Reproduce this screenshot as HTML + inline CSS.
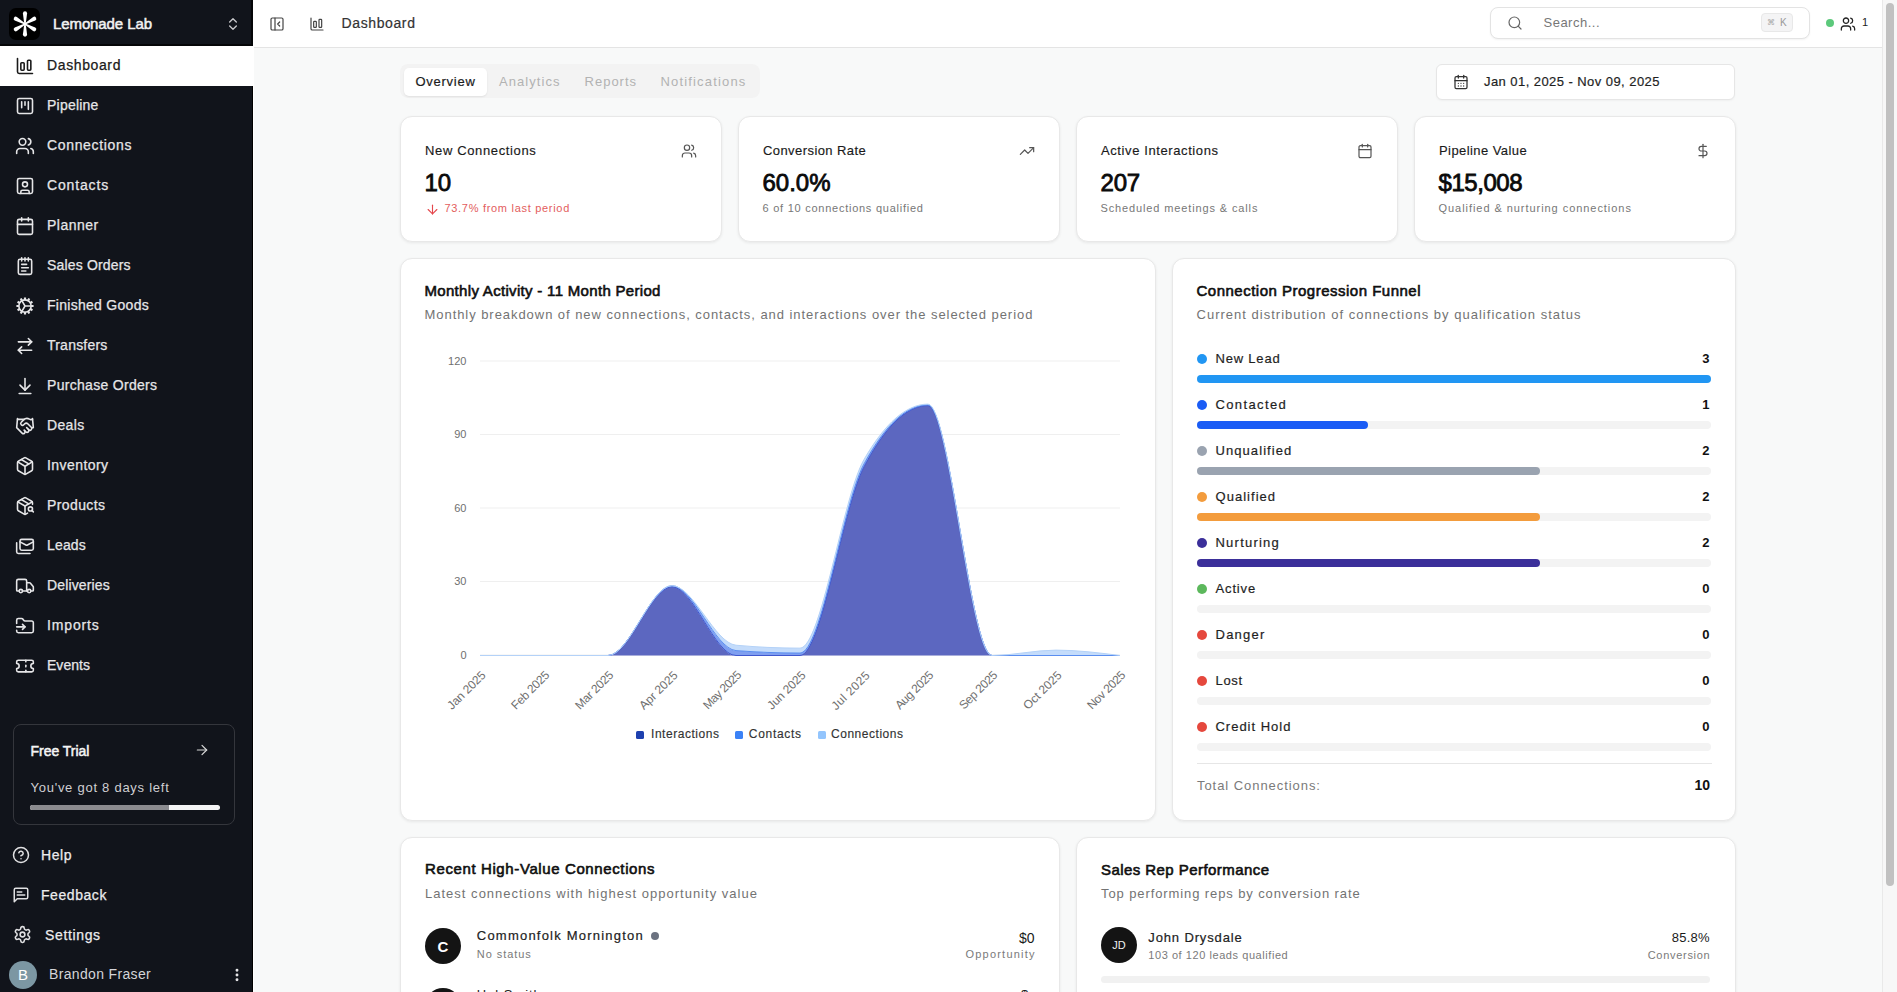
<!DOCTYPE html>
<html><head><meta charset="utf-8"><title>Dashboard</title><style>*{margin:0;padding:0;box-sizing:border-box}
html,body{width:1897px;height:992px;overflow:hidden;background:#f8f9f9;font-family:"Liberation Sans",sans-serif}
.t{position:absolute;white-space:nowrap;line-height:1}
</style></head>
<body>
<div style="position:absolute;left:400px;top:837px;width:660px;height:200px;background:#fff;border:1px solid #e8e8e8;border-radius:12px;box-shadow:0 1px 3px rgba(0,0,0,.07);box-sizing:border-box;"></div><div class="t" style="left:425.00px;top:861.10px;font-size:15px;color:#0f0f0f;font-weight:400;letter-spacing:0.612px;-webkit-text-stroke:0.6px #0f0f0f;">Recent High-Value Connections</div><div class="t" style="left:425.00px;top:886.80px;font-size:13px;color:#737373;font-weight:400;letter-spacing:1.013px;">Latest connections with highest opportunity value</div><div style="position:absolute;left:425px;top:928px;width:36px;height:36px;background:#141414;border-radius:50%;"></div><div class="t" style="left:437.59px;top:938.80px;font-size:15px;color:#fff;font-weight:700;">C</div><div class="t" style="left:476.80px;top:929.20px;font-size:13px;color:#222222;font-weight:400;letter-spacing:1.217px;-webkit-text-stroke:0.2px #222222;">Commonfolk Mornington</div><div style="position:absolute;left:651px;top:932px;width:8px;height:8px;background:#6b7280;border-radius:50%;"></div><div class="t" style="left:476.80px;top:948.89px;font-size:11px;color:#7a7a7a;font-weight:400;letter-spacing:0.938px;">No status</div><div class="t" style="left:1018.94px;top:930.65px;font-size:14px;color:#1a1a1a;font-weight:400;">$0</div><div class="t" style="left:965.50px;top:949.19px;font-size:11px;color:#7a7a7a;font-weight:400;letter-spacing:1.209px;">Opportunity</div><div style="position:absolute;left:425px;top:988px;width:36px;height:36px;background:#141414;border-radius:50%;"></div><div class="t" style="left:476.80px;top:987.50px;font-size:13px;color:#222222;font-weight:400;letter-spacing:0.955px;">Hal Smith</div><div class="t" style="left:1021.00px;top:987.50px;font-size:13px;color:#1a1a1a;font-weight:400;">$</div><div style="position:absolute;left:1076px;top:837px;width:660px;height:200px;background:#fff;border:1px solid #e8e8e8;border-radius:12px;box-shadow:0 1px 3px rgba(0,0,0,.07);box-sizing:border-box;"></div><div class="t" style="left:1101.00px;top:861.70px;font-size:15px;color:#0f0f0f;font-weight:400;letter-spacing:0.437px;-webkit-text-stroke:0.6px #0f0f0f;">Sales Rep Performance</div><div class="t" style="left:1101.00px;top:887.30px;font-size:13px;color:#737373;font-weight:400;letter-spacing:0.897px;">Top performing reps by conversion rate</div><div style="position:absolute;left:1101px;top:927px;width:36px;height:36px;background:#141414;border-radius:50%;"></div><div class="t" style="left:1112.28px;top:939.69px;font-size:11px;color:#f0f0f0;font-weight:400;">JD</div><div class="t" style="left:1148.30px;top:931.30px;font-size:13px;color:#222222;font-weight:400;letter-spacing:0.865px;-webkit-text-stroke:0.2px #222222;">John Drysdale</div><div class="t" style="left:1148.30px;top:950.09px;font-size:11px;color:#7a7a7a;font-weight:400;letter-spacing:0.560px;">103 of 120 leads qualified</div><div class="t" style="left:1671.70px;top:931.30px;font-size:13px;color:#1a1a1a;font-weight:400;letter-spacing:0.281px;">85.8%</div><div class="t" style="left:1647.70px;top:950.09px;font-size:11px;color:#7a7a7a;font-weight:400;letter-spacing:0.705px;">Conversion</div><div style="position:absolute;left:1101px;top:976px;width:609px;height:7px;background:#f1f1f1;border-radius:4px;"></div><div style="position:absolute;left:400px;top:258px;width:756px;height:563px;background:#fff;border:1px solid #e8e8e8;border-radius:12px;box-shadow:0 1px 3px rgba(0,0,0,.07);box-sizing:border-box;"></div><div class="t" style="left:424.50px;top:282.50px;font-size:15px;color:#0f0f0f;font-weight:400;letter-spacing:0.312px;-webkit-text-stroke:0.6px #0f0f0f;">Monthly Activity - 11 Month Period</div><div class="t" style="left:424.50px;top:308.10px;font-size:13px;color:#737373;font-weight:400;letter-spacing:0.946px;">Monthly breakdown of new connections, contacts, and interactions over the selected period</div><svg style="position:absolute;left:0;top:0" width="1897" height="992"><line x1="480" x2="1120" y1="655.0" y2="655.0" stroke="#efefef" stroke-width="1"/><line x1="480" x2="1120" y1="581.5" y2="581.5" stroke="#efefef" stroke-width="1"/><line x1="480" x2="1120" y1="508.0" y2="508.0" stroke="#efefef" stroke-width="1"/><line x1="480" x2="1120" y1="434.5" y2="434.5" stroke="#efefef" stroke-width="1"/><line x1="480" x2="1120" y1="361.0" y2="361.0" stroke="#efefef" stroke-width="1"/><path d="M480.00,655.50C501.33,655.50 522.67,655.50 544.00,655.50C565.33,655.50 586.67,655.50 608.00,655.50C629.33,655.50 650.67,586.90 672.00,586.90C693.33,586.90 714.67,655.50 736.00,655.50C757.33,655.50 778.67,655.50 800.00,655.50C821.33,655.50 842.67,507.68 864.00,466.85C885.33,426.02 906.67,405.60 928.00,405.60C949.33,405.60 970.67,655.50 992.00,655.50C1013.33,655.50 1034.67,655.50 1056.00,655.50C1077.33,655.50 1098.67,655.50 1120.00,655.50L1120.00,655.50C1098.67,655.50 1077.33,655.50 1056.00,655.50C1034.67,655.50 1013.33,655.50 992.00,655.50C970.67,655.50 949.33,655.50 928.00,655.50C906.67,655.50 885.33,655.50 864.00,655.50C842.67,655.50 821.33,655.50 800.00,655.50C778.67,655.50 757.33,655.50 736.00,655.50C714.67,655.50 693.33,655.50 672.00,655.50C650.67,655.50 629.33,655.50 608.00,655.50C586.67,655.50 565.33,655.50 544.00,655.50C522.67,655.50 501.33,655.50 480.00,655.50Z" fill="#5c67c0" fill-opacity="1" stroke="none"/><path d="M480.00,655.50C501.33,655.50 522.67,655.50 544.00,655.50C565.33,655.50 586.67,655.50 608.00,655.50C629.33,655.50 650.67,585.67 672.00,585.67C693.33,585.67 714.67,648.97 736.00,650.60C757.33,652.23 778.67,653.05 800.00,653.05C821.33,653.05 842.67,503.27 864.00,463.91C885.33,424.55 906.67,404.87 928.00,404.87C949.33,404.87 970.67,655.50 992.00,655.50C1013.33,655.50 1034.67,655.50 1056.00,655.50C1077.33,655.50 1098.67,655.50 1120.00,655.50L1120.00,655.50C1098.67,655.50 1077.33,655.50 1056.00,655.50C1034.67,655.50 1013.33,655.50 992.00,655.50C970.67,655.50 949.33,405.60 928.00,405.60C906.67,405.60 885.33,426.02 864.00,466.85C842.67,507.68 821.33,655.50 800.00,655.50C778.67,655.50 757.33,655.50 736.00,655.50C714.67,655.50 693.33,586.90 672.00,586.90C650.67,586.90 629.33,655.50 608.00,655.50C586.67,655.50 565.33,655.50 544.00,655.50C522.67,655.50 501.33,655.50 480.00,655.50Z" fill="#7f9ff0" fill-opacity="1" stroke="none"/><path d="M480.00,655.50C501.33,655.50 522.67,655.50 544.00,655.50C565.33,655.50 586.67,655.50 608.00,655.50C629.33,655.50 650.67,585.67 672.00,585.67C693.33,585.67 714.67,643.25 736.00,645.21C757.33,647.17 778.67,648.15 800.00,648.15C821.33,648.15 842.67,496.41 864.00,459.50C885.33,422.59 906.67,404.13 928.00,404.13C949.33,404.13 970.67,655.50 992.00,655.50C1013.33,655.50 1034.67,650.11 1056.00,650.11C1077.33,650.11 1098.67,652.81 1120.00,655.50L1120.00,655.50C1098.67,655.50 1077.33,655.50 1056.00,655.50C1034.67,655.50 1013.33,655.50 992.00,655.50C970.67,655.50 949.33,404.87 928.00,404.87C906.67,404.87 885.33,424.55 864.00,463.91C842.67,503.27 821.33,653.05 800.00,653.05C778.67,653.05 757.33,652.23 736.00,650.60C714.67,648.97 693.33,585.67 672.00,585.67C650.67,585.67 629.33,655.50 608.00,655.50C586.67,655.50 565.33,655.50 544.00,655.50C522.67,655.50 501.33,655.50 480.00,655.50Z" fill="#c4dcfb" fill-opacity="1" stroke="none"/><path d="M480.00,655.50C501.33,655.50 522.67,655.50 544.00,655.50C565.33,655.50 586.67,655.50 608.00,655.50C629.33,655.50 650.67,586.90 672.00,586.90C693.33,586.90 714.67,655.50 736.00,655.50C757.33,655.50 778.67,655.50 800.00,655.50C821.33,655.50 842.67,507.68 864.00,466.85C885.33,426.02 906.67,405.60 928.00,405.60C949.33,405.60 970.67,655.50 992.00,655.50C1013.33,655.50 1034.67,655.50 1056.00,655.50C1077.33,655.50 1098.67,655.50 1120.00,655.50" fill="none" stroke="#4058cf" stroke-width="1"/><path d="M480.00,655.50C501.33,655.50 522.67,655.50 544.00,655.50C565.33,655.50 586.67,655.50 608.00,655.50C629.33,655.50 650.67,585.67 672.00,585.67C693.33,585.67 714.67,648.97 736.00,650.60C757.33,652.23 778.67,653.05 800.00,653.05C821.33,653.05 842.67,503.27 864.00,463.91C885.33,424.55 906.67,404.87 928.00,404.87C949.33,404.87 970.67,655.50 992.00,655.50C1013.33,655.50 1034.67,655.50 1056.00,655.50C1077.33,655.50 1098.67,655.50 1120.00,655.50" fill="none" stroke="#5a8ef0" stroke-width="1"/><path d="M480.00,655.50C501.33,655.50 522.67,655.50 544.00,655.50C565.33,655.50 586.67,655.50 608.00,655.50C629.33,655.50 650.67,585.67 672.00,585.67C693.33,585.67 714.67,643.25 736.00,645.21C757.33,647.17 778.67,648.15 800.00,648.15C821.33,648.15 842.67,496.41 864.00,459.50C885.33,422.59 906.67,404.13 928.00,404.13C949.33,404.13 970.67,655.50 992.00,655.50C1013.33,655.50 1034.67,650.11 1056.00,650.11C1077.33,650.11 1098.67,652.81 1120.00,655.50" fill="none" stroke="#b4d2f8" stroke-width="1"/></svg><div class="t" style="left:460.38px;top:649.69px;font-size:11px;color:#6f6f6f;font-weight:400;">0</div><div class="t" style="left:454.25px;top:576.19px;font-size:11px;color:#6f6f6f;font-weight:400;">30</div><div class="t" style="left:454.25px;top:502.69px;font-size:11px;color:#6f6f6f;font-weight:400;">60</div><div class="t" style="left:454.25px;top:429.19px;font-size:11px;color:#6f6f6f;font-weight:400;">90</div><div class="t" style="left:448.12px;top:355.69px;font-size:11px;color:#6f6f6f;font-weight:400;">120</div><div class="t" style="left:437.50px;top:665.84px;font-size:12px;color:#6f6f6f;letter-spacing:-0.123px;transform-origin:100% 84.65%;transform:rotate(-45deg);">Jan 2025</div><div class="t" style="left:501.50px;top:665.84px;font-size:12px;color:#6f6f6f;letter-spacing:-0.312px;transform-origin:100% 84.65%;transform:rotate(-45deg);">Feb 2025</div><div class="t" style="left:565.50px;top:665.84px;font-size:12px;color:#6f6f6f;letter-spacing:-0.312px;transform-origin:100% 84.65%;transform:rotate(-45deg);">Mar 2025</div><div class="t" style="left:629.50px;top:665.84px;font-size:12px;color:#6f6f6f;letter-spacing:-0.027px;transform-origin:100% 84.65%;transform:rotate(-45deg);">Apr 2025</div><div class="t" style="left:693.50px;top:665.84px;font-size:12px;color:#6f6f6f;letter-spacing:-0.598px;transform-origin:100% 84.65%;transform:rotate(-45deg);">May 2025</div><div class="t" style="left:757.50px;top:665.84px;font-size:12px;color:#6f6f6f;letter-spacing:-0.123px;transform-origin:100% 84.65%;transform:rotate(-45deg);">Jun 2025</div><div class="t" style="left:821.50px;top:665.84px;font-size:12px;color:#6f6f6f;letter-spacing:0.449px;transform-origin:100% 84.65%;transform:rotate(-45deg);">Jul 2025</div><div class="t" style="left:885.50px;top:665.84px;font-size:12px;color:#6f6f6f;letter-spacing:-0.408px;transform-origin:100% 84.65%;transform:rotate(-45deg);">Aug 2025</div><div class="t" style="left:949.50px;top:665.84px;font-size:12px;color:#6f6f6f;letter-spacing:-0.408px;transform-origin:100% 84.65%;transform:rotate(-45deg);">Sep 2025</div><div class="t" style="left:1013.50px;top:665.84px;font-size:12px;color:#6f6f6f;letter-spacing:-0.025px;transform-origin:100% 84.65%;transform:rotate(-45deg);">Oct 2025</div><div class="t" style="left:1077.50px;top:665.84px;font-size:12px;color:#6f6f6f;letter-spacing:-0.408px;transform-origin:100% 84.65%;transform:rotate(-45deg);">Nov 2025</div><div style="position:absolute;left:636px;top:731px;width:8px;height:8px;background:#1e40af;border-radius:1.5px;"></div><div class="t" style="left:651.00px;top:728.34px;font-size:12px;color:#333333;font-weight:400;letter-spacing:0.544px;-webkit-text-stroke:0.15px #333333;">Interactions</div><div style="position:absolute;left:734.5px;top:731px;width:8px;height:8px;background:#3b82f6;border-radius:1.5px;"></div><div class="t" style="left:748.80px;top:728.34px;font-size:12px;color:#333333;font-weight:400;letter-spacing:0.694px;-webkit-text-stroke:0.15px #333333;">Contacts</div><div style="position:absolute;left:817.5px;top:731px;width:8px;height:8px;background:#93c5fd;border-radius:1.5px;"></div><div class="t" style="left:831.00px;top:728.34px;font-size:12px;color:#333333;font-weight:400;letter-spacing:0.530px;-webkit-text-stroke:0.15px #333333;">Connections</div><div style="position:absolute;left:1172px;top:258px;width:564px;height:563px;background:#fff;border:1px solid #e8e8e8;border-radius:12px;box-shadow:0 1px 3px rgba(0,0,0,.07);box-sizing:border-box;"></div><div class="t" style="left:1196.50px;top:282.70px;font-size:15px;color:#0f0f0f;font-weight:400;letter-spacing:0.495px;-webkit-text-stroke:0.6px #0f0f0f;">Connection Progression Funnel</div><div class="t" style="left:1196.50px;top:308.10px;font-size:13px;color:#737373;font-weight:400;letter-spacing:1.013px;">Current distribution of connections by qualification status</div><div style="position:absolute;left:1197px;top:354px;width:10px;height:10px;background:#2196f3;border-radius:50%;"></div><div class="t" style="left:1215.50px;top:352.20px;font-size:13px;color:#1f1f1f;font-weight:400;letter-spacing:0.805px;-webkit-text-stroke:0.2px #1f1f1f;">New Lead</div><div class="t" style="left:1702.27px;top:352.20px;font-size:13px;color:#111;font-weight:700;">3</div><div style="position:absolute;left:1197px;top:375px;width:514px;height:8px;background:#f3f3f3;border-radius:4px;"></div><div style="position:absolute;left:1197px;top:375px;width:514px;height:8px;background:#2196f3;border-radius:4px;"></div><div style="position:absolute;left:1197px;top:400px;width:10px;height:10px;background:#1a5cf5;border-radius:50%;"></div><div class="t" style="left:1215.50px;top:398.20px;font-size:13px;color:#1f1f1f;font-weight:400;letter-spacing:1.377px;-webkit-text-stroke:0.2px #1f1f1f;">Contacted</div><div class="t" style="left:1702.27px;top:398.20px;font-size:13px;color:#111;font-weight:700;">1</div><div style="position:absolute;left:1197px;top:421px;width:514px;height:8px;background:#f3f3f3;border-radius:4px;"></div><div style="position:absolute;left:1197px;top:421px;width:171px;height:8px;background:#1a5cf5;border-radius:4px;"></div><div style="position:absolute;left:1197px;top:446px;width:10px;height:10px;background:#9aa3b0;border-radius:50%;"></div><div class="t" style="left:1215.50px;top:444.20px;font-size:13px;color:#1f1f1f;font-weight:400;letter-spacing:1.072px;-webkit-text-stroke:0.2px #1f1f1f;">Unqualified</div><div class="t" style="left:1702.27px;top:444.20px;font-size:13px;color:#111;font-weight:700;">2</div><div style="position:absolute;left:1197px;top:467px;width:514px;height:8px;background:#f3f3f3;border-radius:4px;"></div><div style="position:absolute;left:1197px;top:467px;width:343px;height:8px;background:#9aa3b0;border-radius:4px;"></div><div style="position:absolute;left:1197px;top:492px;width:10px;height:10px;background:#f39c3d;border-radius:50%;"></div><div class="t" style="left:1215.50px;top:490.20px;font-size:13px;color:#1f1f1f;font-weight:400;letter-spacing:1.034px;-webkit-text-stroke:0.2px #1f1f1f;">Qualified</div><div class="t" style="left:1702.27px;top:490.20px;font-size:13px;color:#111;font-weight:700;">2</div><div style="position:absolute;left:1197px;top:513px;width:514px;height:8px;background:#f3f3f3;border-radius:4px;"></div><div style="position:absolute;left:1197px;top:513px;width:343px;height:8px;background:#f39c3d;border-radius:4px;"></div><div style="position:absolute;left:1197px;top:538px;width:10px;height:10px;background:#3b2f9a;border-radius:50%;"></div><div class="t" style="left:1215.50px;top:536.20px;font-size:13px;color:#1f1f1f;font-weight:400;letter-spacing:1.227px;-webkit-text-stroke:0.2px #1f1f1f;">Nurturing</div><div class="t" style="left:1702.27px;top:536.20px;font-size:13px;color:#111;font-weight:700;">2</div><div style="position:absolute;left:1197px;top:559px;width:514px;height:8px;background:#f3f3f3;border-radius:4px;"></div><div style="position:absolute;left:1197px;top:559px;width:343px;height:8px;background:#3b2f9a;border-radius:4px;"></div><div style="position:absolute;left:1197px;top:584px;width:10px;height:10px;background:#5cb85c;border-radius:50%;"></div><div class="t" style="left:1215.50px;top:582.20px;font-size:13px;color:#1f1f1f;font-weight:400;letter-spacing:0.859px;-webkit-text-stroke:0.2px #1f1f1f;">Active</div><div class="t" style="left:1702.27px;top:582.20px;font-size:13px;color:#111;font-weight:700;">0</div><div style="position:absolute;left:1197px;top:605px;width:514px;height:8px;background:#f3f3f3;border-radius:4px;"></div><div style="position:absolute;left:1197px;top:630px;width:10px;height:10px;background:#e5483d;border-radius:50%;"></div><div class="t" style="left:1215.50px;top:628.20px;font-size:13px;color:#1f1f1f;font-weight:400;letter-spacing:1.249px;-webkit-text-stroke:0.2px #1f1f1f;">Danger</div><div class="t" style="left:1702.27px;top:628.20px;font-size:13px;color:#111;font-weight:700;">0</div><div style="position:absolute;left:1197px;top:651px;width:514px;height:8px;background:#f3f3f3;border-radius:4px;"></div><div style="position:absolute;left:1197px;top:676px;width:10px;height:10px;background:#e5483d;border-radius:50%;"></div><div class="t" style="left:1215.50px;top:674.20px;font-size:13px;color:#1f1f1f;font-weight:400;letter-spacing:0.674px;-webkit-text-stroke:0.2px #1f1f1f;">Lost</div><div class="t" style="left:1702.27px;top:674.20px;font-size:13px;color:#111;font-weight:700;">0</div><div style="position:absolute;left:1197px;top:697px;width:514px;height:8px;background:#f3f3f3;border-radius:4px;"></div><div style="position:absolute;left:1197px;top:722px;width:10px;height:10px;background:#e5483d;border-radius:50%;"></div><div class="t" style="left:1215.50px;top:720.20px;font-size:13px;color:#1f1f1f;font-weight:400;letter-spacing:0.985px;-webkit-text-stroke:0.2px #1f1f1f;">Credit Hold</div><div class="t" style="left:1702.27px;top:720.20px;font-size:13px;color:#111;font-weight:700;">0</div><div style="position:absolute;left:1197px;top:743px;width:514px;height:8px;background:#f3f3f3;border-radius:4px;"></div><div style="position:absolute;left:1197px;top:763px;width:515px;height:1px;background:#e6e6e6;"></div><div class="t" style="left:1197.00px;top:779.00px;font-size:13px;color:#7a7a7a;font-weight:400;letter-spacing:0.942px;">Total Connections:</div><div class="t" style="left:1694.44px;top:778.15px;font-size:14px;color:#111;font-weight:700;">10</div><div style="position:absolute;left:400px;top:116px;width:322px;height:126px;background:#fff;border:1px solid #e8e8e8;border-radius:12px;box-shadow:0 1px 3px rgba(0,0,0,.07);box-sizing:border-box;"></div><div class="t" style="left:425.00px;top:144.20px;font-size:13px;color:#1a1a1a;font-weight:400;letter-spacing:0.634px;-webkit-text-stroke:0.15px #1a1a1a;">New Connections</div><div class="t" style="left:424.50px;top:171.28px;font-size:24px;color:#0a0a0a;font-weight:400;-webkit-text-stroke:0.8px #0a0a0a;">10</div><svg style="position:absolute;left:424.5px;top:202px" width="15" height="15" viewBox="0 0 24 24" fill="none" stroke="#e5484d" stroke-width="1.8" stroke-linecap="round" stroke-linejoin="round"><path d="M12 5v14"/><path d="m19 12-7 7-7-7"/></svg><div class="t" style="left:444.40px;top:202.59px;font-size:11px;color:#e35d5d;font-weight:400;letter-spacing:0.708px;">73.7% from last period</div><svg style="position:absolute;left:681px;top:143px" width="16" height="16" viewBox="0 0 24 24" fill="none" stroke="#555" stroke-width="1.8" stroke-linecap="round" stroke-linejoin="round"><path d="M16 21v-2a4 4 0 0 0-4-4H6a4 4 0 0 0-4 4v2"/><circle cx="9" cy="7" r="4"/><path d="M22 21v-2a4 4 0 0 0-3-3.87"/><path d="M16 3.13a4 4 0 0 1 0 7.75"/></svg><div style="position:absolute;left:738px;top:116px;width:322px;height:126px;background:#fff;border:1px solid #e8e8e8;border-radius:12px;box-shadow:0 1px 3px rgba(0,0,0,.07);box-sizing:border-box;"></div><div class="t" style="left:763.00px;top:144.20px;font-size:13px;color:#1a1a1a;font-weight:400;letter-spacing:0.424px;-webkit-text-stroke:0.15px #1a1a1a;">Conversion Rate</div><div class="t" style="left:762.50px;top:171.28px;font-size:24px;color:#0a0a0a;font-weight:400;letter-spacing:-0.012px;-webkit-text-stroke:0.8px #0a0a0a;">60.0%</div><div class="t" style="left:762.50px;top:202.59px;font-size:11px;color:#777777;font-weight:400;letter-spacing:0.748px;">6 of 10 connections qualified</div><svg style="position:absolute;left:1019px;top:143px" width="16" height="16" viewBox="0 0 24 24" fill="none" stroke="#555" stroke-width="1.8" stroke-linecap="round" stroke-linejoin="round"><polyline points="22 7 13.5 15.5 8.5 10.5 2 17"/><polyline points="16 7 22 7 22 13"/></svg><div style="position:absolute;left:1076px;top:116px;width:322px;height:126px;background:#fff;border:1px solid #e8e8e8;border-radius:12px;box-shadow:0 1px 3px rgba(0,0,0,.07);box-sizing:border-box;"></div><div class="t" style="left:1101.00px;top:144.20px;font-size:13px;color:#1a1a1a;font-weight:400;letter-spacing:0.598px;-webkit-text-stroke:0.15px #1a1a1a;">Active Interactions</div><div class="t" style="left:1100.50px;top:171.28px;font-size:24px;color:#0a0a0a;font-weight:400;letter-spacing:-0.166px;-webkit-text-stroke:0.8px #0a0a0a;">207</div><div class="t" style="left:1100.50px;top:202.59px;font-size:11px;color:#777777;font-weight:400;letter-spacing:0.871px;">Scheduled meetings &amp; calls</div><svg style="position:absolute;left:1357px;top:143px" width="16" height="16" viewBox="0 0 24 24" fill="none" stroke="#555" stroke-width="1.8" stroke-linecap="round" stroke-linejoin="round"><path d="M8 2v4"/><path d="M16 2v4"/><rect width="18" height="18" x="3" y="4" rx="2"/><path d="M3 10h18"/></svg><div style="position:absolute;left:1414px;top:116px;width:322px;height:126px;background:#fff;border:1px solid #e8e8e8;border-radius:12px;box-shadow:0 1px 3px rgba(0,0,0,.07);box-sizing:border-box;"></div><div class="t" style="left:1439.00px;top:144.20px;font-size:13px;color:#1a1a1a;font-weight:400;letter-spacing:0.424px;-webkit-text-stroke:0.15px #1a1a1a;">Pipeline Value</div><div class="t" style="left:1438.50px;top:171.28px;font-size:24px;color:#0a0a0a;font-weight:400;letter-spacing:-0.456px;-webkit-text-stroke:0.8px #0a0a0a;">$15,008</div><div class="t" style="left:1438.50px;top:202.59px;font-size:11px;color:#777777;font-weight:400;letter-spacing:0.948px;">Qualified &amp; nurturing connections</div><svg style="position:absolute;left:1695px;top:143px" width="16" height="16" viewBox="0 0 24 24" fill="none" stroke="#555" stroke-width="1.8" stroke-linecap="round" stroke-linejoin="round"><line x1="12" x2="12" y1="2" y2="22"/><path d="M17 5H9.5a3.5 3.5 0 0 0 0 7h5a3.5 3.5 0 0 1 0 7H6"/></svg><div style="position:absolute;left:400px;top:64px;width:360px;height:34px;background:#f3f3f3;border-radius:8px;"></div><div style="position:absolute;left:403.5px;top:67.5px;width:83.5px;height:28.5px;background:#fff;border-radius:5px;box-shadow:0 1px 2px rgba(0,0,0,.08);"></div><div class="t" style="left:415.50px;top:74.80px;font-size:13px;color:#1c1c1c;font-weight:400;letter-spacing:0.730px;-webkit-text-stroke:0.2px #1c1c1c;">Overview</div><div class="t" style="left:499.00px;top:74.80px;font-size:13px;color:#b2b2b2;font-weight:400;letter-spacing:1.071px;">Analytics</div><div class="t" style="left:584.50px;top:74.80px;font-size:13px;color:#b2b2b2;font-weight:400;letter-spacing:1.011px;">Reports</div><div class="t" style="left:660.50px;top:74.80px;font-size:13px;color:#b2b2b2;font-weight:400;letter-spacing:1.164px;">Notifications</div><div style="position:absolute;left:1436px;top:64px;width:299px;height:36px;background:#fff;border:1px solid #e6e6e6;border-radius:6px;box-shadow:0 1px 2px rgba(0,0,0,.04);"></div><svg style="position:absolute;left:1452.5px;top:74.3px" width="16" height="16" viewBox="0 0 24 24" fill="none" stroke="#333" stroke-width="1.9" stroke-linecap="round" stroke-linejoin="round"><path d="M8 2v4"/><path d="M16 2v4"/><rect width="18" height="18" x="3" y="4" rx="2"/><path d="M3 10h18"/><path d="M8 14h.01"/><path d="M12 14h.01"/><path d="M16 14h.01"/><path d="M8 18h.01"/><path d="M12 18h.01"/><path d="M16 18h.01"/></svg><div class="t" style="left:1484.00px;top:74.90px;font-size:13px;color:#1f1f1f;font-weight:400;letter-spacing:0.438px;-webkit-text-stroke:0.2px #1f1f1f;">Jan 01, 2025 - Nov 09, 2025</div><div style="position:absolute;left:253px;top:0px;width:1629px;height:48px;background:#fff;border-bottom:1px solid #e4e4e4;"></div><svg style="position:absolute;left:269px;top:16px" width="16" height="16" viewBox="0 0 24 24" fill="none" stroke="#444" stroke-width="1.8" stroke-linecap="round" stroke-linejoin="round"><rect width="18" height="18" x="3" y="3" rx="2"/><path d="M9 3v18"/><path d="m16 15-3-3 3-3"/></svg><svg style="position:absolute;left:309px;top:16px" width="16" height="16" viewBox="0 0 24 24" fill="none" stroke="#444" stroke-width="1.8" stroke-linecap="round" stroke-linejoin="round"><path d="M3 3v16a2 2 0 0 0 2 2h16"/><rect x="15" y="5" width="4" height="12" rx="1"/><rect x="7" y="8" width="4" height="9" rx="1"/></svg><div class="t" style="left:341.50px;top:16.35px;font-size:14px;color:#333333;font-weight:400;letter-spacing:0.618px;-webkit-text-stroke:0.2px #333333;">Dashboard</div><div style="position:absolute;left:1490px;top:7px;width:320px;height:32px;background:#fff;border:1px solid #e3e3e3;border-radius:8px;box-shadow:0 1px 2px rgba(0,0,0,.05);"></div><svg style="position:absolute;left:1507px;top:15px" width="16" height="16" viewBox="0 0 24 24" fill="none" stroke="#666" stroke-width="1.8" stroke-linecap="round" stroke-linejoin="round"><circle cx="11" cy="11" r="8"/><path d="m21 21-4.3-4.3"/></svg><div class="t" style="left:1543.50px;top:16.00px;font-size:13px;color:#777777;font-weight:400;letter-spacing:0.496px;">Search...</div><div style="position:absolute;left:1761px;top:13px;width:32px;height:19px;background:#f4f4f5;border:1px solid #e8e8e8;border-radius:4px;"></div><div class="t" style="left:1767.00px;top:18.73px;font-size:8px;color:#a8a8a8;font-weight:400;">⌘</div><div class="t" style="left:1780.00px;top:17.84px;font-size:10px;color:#999999;font-weight:400;">K</div><div style="position:absolute;left:1826px;top:19px;width:8px;height:8px;background:#5cc97b;border-radius:50%;"></div><svg style="position:absolute;left:1839.5px;top:15.5px" width="16" height="16" viewBox="0 0 24 24" fill="none" stroke="#222" stroke-width="1.9" stroke-linecap="round" stroke-linejoin="round"><path d="M16 21v-2a4 4 0 0 0-4-4H6a4 4 0 0 0-4 4v2"/><circle cx="9" cy="7" r="4"/><path d="M22 21v-2a4 4 0 0 0-3-3.87"/><path d="M16 3.13a4 4 0 0 1 0 7.75"/></svg><div class="t" style="left:1862.00px;top:17.19px;font-size:11px;color:#222;font-weight:400;">1</div><div style="position:absolute;left:1882px;top:0px;width:15px;height:992px;background:#f7f7f7;border-left:1px solid #e9e9e9;box-sizing:border-box;"></div><div style="position:absolute;left:1886px;top:3px;width:8px;height:883px;background:#c1c1c1;border-radius:4px;"></div><div style="position:absolute;left:0;top:0;width:253px;height:992px;background:#11141b;border-right:1px solid #000;"></div><div style="position:absolute;left:253px;top:0px;width:1px;height:992px;background:#fff;"></div><div style="position:absolute;left:0px;top:44px;width:253px;height:2px;background:#050608;"></div><div style="position:absolute;left:251px;top:0px;width:2px;height:46px;background:#050608;"></div><div style="position:absolute;left:9px;top:8px;width:31px;height:32px;background:#000;border-radius:7px;"></div><svg style="position:absolute;left:11.7px;top:10.5px" width="26" height="26" viewBox="0 0 26 26"><path transform="rotate(0 13 13)" d="M12.3 13 L10.9 2.4 A2.1 2.1 0 0 1 15.1 2.4 L13.7 13 Z" fill="#fff"/><path transform="rotate(60 13 13)" d="M12.3 13 L10.9 2.4 A2.1 2.1 0 0 1 15.1 2.4 L13.7 13 Z" fill="#fff"/><path transform="rotate(120 13 13)" d="M12.3 13 L10.9 2.4 A2.1 2.1 0 0 1 15.1 2.4 L13.7 13 Z" fill="#fff"/><path transform="rotate(180 13 13)" d="M12.3 13 L10.9 2.4 A2.1 2.1 0 0 1 15.1 2.4 L13.7 13 Z" fill="#fff"/><path transform="rotate(240 13 13)" d="M12.3 13 L10.9 2.4 A2.1 2.1 0 0 1 15.1 2.4 L13.7 13 Z" fill="#fff"/><path transform="rotate(300 13 13)" d="M12.3 13 L10.9 2.4 A2.1 2.1 0 0 1 15.1 2.4 L13.7 13 Z" fill="#fff"/><circle cx="13" cy="13" r="1.2" fill="#fff"/></svg><div class="t" style="left:53.00px;top:16.30px;font-size:15px;color:#f2f2f2;font-weight:400;letter-spacing:-0.101px;-webkit-text-stroke:0.5px #f2f2f2;">Lemonade Lab</div><svg style="position:absolute;left:225px;top:16px" width="16" height="16" viewBox="0 0 24 24" fill="none" stroke="#c9c9cc" stroke-width="2" stroke-linecap="round" stroke-linejoin="round"><path d="m7 15 5 5 5-5"/><path d="m7 9 5-5 5 5"/></svg><div style="position:absolute;left:0px;top:46px;width:253px;height:40px;background:#ffffff;"></div><svg style="position:absolute;left:15px;top:56px" width="20" height="20" viewBox="0 0 24 24" fill="none" stroke="#1a1a1a" stroke-width="1.9" stroke-linecap="round" stroke-linejoin="round"><path d="M3 3v16a2 2 0 0 0 2 2h16"/><rect x="15" y="5" width="4" height="12" rx="1"/><rect x="7" y="8" width="4" height="9" rx="1"/></svg><div class="t" style="left:47.00px;top:58.15px;font-size:14px;color:#1a1a1a;font-weight:400;letter-spacing:0.618px;-webkit-text-stroke:0.25px #1a1a1a;">Dashboard</div><svg style="position:absolute;left:15px;top:96px" width="20" height="20" viewBox="0 0 24 24" fill="none" stroke="#e6e6e8" stroke-width="1.9" stroke-linecap="round" stroke-linejoin="round"><rect width="18" height="18" x="3" y="3" rx="2"/><path d="M8 7v7"/><path d="M12 7v4"/><path d="M16 7v9"/></svg><div class="t" style="left:47.00px;top:98.15px;font-size:14px;color:#e6e6e8;font-weight:400;letter-spacing:0.215px;-webkit-text-stroke:0.25px #e6e6e8;">Pipeline</div><svg style="position:absolute;left:15px;top:136px" width="20" height="20" viewBox="0 0 24 24" fill="none" stroke="#e6e6e8" stroke-width="1.9" stroke-linecap="round" stroke-linejoin="round"><path d="M16 21v-2a4 4 0 0 0-4-4H6a4 4 0 0 0-4 4v2"/><circle cx="9" cy="7" r="4"/><path d="M22 21v-2a4 4 0 0 0-3-3.87"/><path d="M16 3.13a4 4 0 0 1 0 7.75"/></svg><div class="t" style="left:47.00px;top:138.15px;font-size:14px;color:#e6e6e8;font-weight:400;letter-spacing:0.660px;-webkit-text-stroke:0.25px #e6e6e8;">Connections</div><svg style="position:absolute;left:15px;top:176px" width="20" height="20" viewBox="0 0 24 24" fill="none" stroke="#e6e6e8" stroke-width="1.9" stroke-linecap="round" stroke-linejoin="round"><rect width="18" height="18" x="3" y="3" rx="2"/><circle cx="12" cy="10" r="3"/><path d="M7 21v-2a2 2 0 0 1 2-2h6a2 2 0 0 1 2 2v2"/></svg><div class="t" style="left:47.00px;top:178.15px;font-size:14px;color:#e6e6e8;font-weight:400;letter-spacing:0.852px;-webkit-text-stroke:0.25px #e6e6e8;">Contacts</div><svg style="position:absolute;left:15px;top:216px" width="20" height="20" viewBox="0 0 24 24" fill="none" stroke="#e6e6e8" stroke-width="1.9" stroke-linecap="round" stroke-linejoin="round"><path d="M8 2v4"/><path d="M16 2v4"/><rect width="18" height="18" x="3" y="4" rx="2"/><path d="M3 10h18"/></svg><div class="t" style="left:47.00px;top:218.15px;font-size:14px;color:#e6e6e8;font-weight:400;letter-spacing:0.494px;-webkit-text-stroke:0.25px #e6e6e8;">Planner</div><svg style="position:absolute;left:15px;top:256px" width="20" height="20" viewBox="0 0 24 24" fill="none" stroke="#e6e6e8" stroke-width="1.9" stroke-linecap="round" stroke-linejoin="round"><path d="M8 2v4"/><path d="M12 2v4"/><path d="M16 2v4"/><rect width="16" height="18" x="4" y="4" rx="2"/><path d="M8 10h6"/><path d="M8 14h8"/><path d="M8 18h5"/></svg><div class="t" style="left:47.00px;top:258.15px;font-size:14px;color:#e6e6e8;font-weight:400;letter-spacing:0.175px;-webkit-text-stroke:0.25px #e6e6e8;">Sales Orders</div><svg style="position:absolute;left:15px;top:296px" width="20" height="20" viewBox="0 0 24 24" fill="none" stroke="#e6e6e8" stroke-width="1.9" stroke-linecap="round" stroke-linejoin="round"><circle cx="12" cy="12" r="7.4"/><path stroke-linecap="butt" stroke-width="2.6" d="M19.00 12.00L22.30 12.00M18.06 15.50L20.92 17.15M15.50 18.06L17.15 20.92M12.00 19.00L12.00 22.30M8.50 18.06L6.85 20.92M5.94 15.50L3.08 17.15M5.00 12.00L1.70 12.00M5.94 8.50L3.08 6.85M8.50 5.94L6.85 3.08M12.00 5.00L12.00 1.70M15.50 5.94L17.15 3.08M18.06 8.50L20.92 6.85"/><path d="M12 12H19.2M12 12L8.4 5.8M12 12L8.4 18.2"/></svg><div class="t" style="left:47.00px;top:298.15px;font-size:14px;color:#e6e6e8;font-weight:400;letter-spacing:0.283px;-webkit-text-stroke:0.25px #e6e6e8;">Finished Goods</div><svg style="position:absolute;left:15px;top:336px" width="20" height="20" viewBox="0 0 24 24" fill="none" stroke="#e6e6e8" stroke-width="1.9" stroke-linecap="round" stroke-linejoin="round"><path d="m16 3 4 4-4 4"/><path d="M20 7H4"/><path d="m8 21-4-4 4-4"/><path d="M4 17h16"/></svg><div class="t" style="left:47.00px;top:338.15px;font-size:14px;color:#e6e6e8;font-weight:400;letter-spacing:0.215px;-webkit-text-stroke:0.25px #e6e6e8;">Transfers</div><svg style="position:absolute;left:15px;top:376px" width="20" height="20" viewBox="0 0 24 24" fill="none" stroke="#e6e6e8" stroke-width="1.9" stroke-linecap="round" stroke-linejoin="round"><path d="M12 17V3"/><path d="m6 11 6 6 6-6"/><path d="M19 21H5"/></svg><div class="t" style="left:47.00px;top:378.15px;font-size:14px;color:#e6e6e8;font-weight:400;letter-spacing:0.301px;-webkit-text-stroke:0.25px #e6e6e8;">Purchase Orders</div><svg style="position:absolute;left:15px;top:416px" width="20" height="20" viewBox="0 0 24 24" fill="none" stroke="#e6e6e8" stroke-width="1.9" stroke-linecap="round" stroke-linejoin="round"><path d="m11 17 2 2a1 1 0 1 0 3-3"/><path d="m14 14 2.5 2.5a1 1 0 1 0 3-3l-3.88-3.88a3 3 0 0 0-4.24 0l-.88.88a1 1 0 1 1-3-3l2.81-2.81a5.79 5.79 0 0 1 7.06-.87l.47.28a2 2 0 0 0 1.42.25L21 4"/><path d="m21 3 1 11h-2"/><path d="M3 3 2 14l6.5 6.5a1 1 0 1 0 3-3"/><path d="M3 4h8"/></svg><div class="t" style="left:47.00px;top:418.15px;font-size:14px;color:#e6e6e8;font-weight:400;letter-spacing:0.355px;-webkit-text-stroke:0.25px #e6e6e8;">Deals</div><svg style="position:absolute;left:15px;top:456px" width="20" height="20" viewBox="0 0 24 24" fill="none" stroke="#e6e6e8" stroke-width="1.9" stroke-linecap="round" stroke-linejoin="round"><path d="M11 21.73a2 2 0 0 0 2 0l7-4A2 2 0 0 0 21 16V8a2 2 0 0 0-1-1.73l-7-4a2 2 0 0 0-2 0l-7 4A2 2 0 0 0 3 8v8a2 2 0 0 0 1 1.73z"/><path d="M12 22V12"/><path d="m3.3 7 7.703 4.734a2 2 0 0 0 1.994 0L20.7 7"/><path d="m7.5 4.27 9 5.15"/></svg><div class="t" style="left:47.00px;top:458.15px;font-size:14px;color:#e6e6e8;font-weight:400;letter-spacing:0.430px;-webkit-text-stroke:0.25px #e6e6e8;">Inventory</div><svg style="position:absolute;left:15px;top:496px" width="20" height="20" viewBox="0 0 24 24" fill="none" stroke="#e6e6e8" stroke-width="1.9" stroke-linecap="round" stroke-linejoin="round"><path d="M21 10V8a2 2 0 0 0-1-1.73l-7-4a2 2 0 0 0-2 0l-7 4A2 2 0 0 0 3 8v8a2 2 0 0 0 1 1.73l7 4a2 2 0 0 0 2 0l2-1.14"/><path d="m7.5 4.27 9 5.15"/><polyline points="3.29 7 12 12 20.71 7"/><line x1="12" x2="12" y1="22" y2="12"/><circle cx="18.5" cy="15.5" r="2.5"/><path d="M20.27 17.27 22 19"/></svg><div class="t" style="left:47.00px;top:498.15px;font-size:14px;color:#e6e6e8;font-weight:400;letter-spacing:0.395px;-webkit-text-stroke:0.25px #e6e6e8;">Products</div><svg style="position:absolute;left:15px;top:536px" width="20" height="20" viewBox="0 0 24 24" fill="none" stroke="#e6e6e8" stroke-width="1.9" stroke-linecap="round" stroke-linejoin="round"><rect width="16" height="13" x="6" y="4" rx="2"/><path d="m22 7-7.1 3.78c-.57.3-1.23.3-1.8 0L6 7"/><path d="M2 8v11c0 1.1.9 2 2 2h14"/></svg><div class="t" style="left:47.00px;top:538.15px;font-size:14px;color:#e6e6e8;font-weight:400;letter-spacing:0.169px;-webkit-text-stroke:0.25px #e6e6e8;">Leads</div><svg style="position:absolute;left:15px;top:576px" width="20" height="20" viewBox="0 0 24 24" fill="none" stroke="#e6e6e8" stroke-width="1.9" stroke-linecap="round" stroke-linejoin="round"><path d="M14 18V6a2 2 0 0 0-2-2H4a2 2 0 0 0-2 2v11a1 1 0 0 0 1 1h2"/><path d="M15 18H9"/><path d="M19 18h2a1 1 0 0 0 1-1v-3.65a1 1 0 0 0-.22-.624l-3.48-4.35A1 1 0 0 0 17.52 8H14"/><circle cx="17" cy="18" r="2"/><circle cx="7" cy="18" r="2"/></svg><div class="t" style="left:47.00px;top:578.15px;font-size:14px;color:#e6e6e8;font-weight:400;letter-spacing:0.140px;-webkit-text-stroke:0.25px #e6e6e8;">Deliveries</div><svg style="position:absolute;left:15px;top:616px" width="20" height="20" viewBox="0 0 24 24" fill="none" stroke="#e6e6e8" stroke-width="1.9" stroke-linecap="round" stroke-linejoin="round"><path d="M2 9V5a2 2 0 0 1 2-2h3.9a2 2 0 0 1 1.69.9l.81 1.2a2 2 0 0 0 1.67.9H20a2 2 0 0 1 2 2v10a2 2 0 0 1-2 2H4a2 2 0 0 1-2-2v-1"/><path d="M2 13h10"/><path d="m9 16 3-3-3-3"/></svg><div class="t" style="left:47.00px;top:618.15px;font-size:14px;color:#e6e6e8;font-weight:400;letter-spacing:0.857px;-webkit-text-stroke:0.25px #e6e6e8;">Imports</div><svg style="position:absolute;left:15px;top:656px" width="20" height="20" viewBox="0 0 24 24" fill="none" stroke="#e6e6e8" stroke-width="1.9" stroke-linecap="round" stroke-linejoin="round"><path d="M2 9a3 3 0 0 1 0 6v2a2 2 0 0 0 2 2h16a2 2 0 0 0 2-2v-2a3 3 0 0 1 0-6V7a2 2 0 0 0-2-2H4a2 2 0 0 0-2 2Z"/><path d="M13 5v2"/><path d="M13 17v2"/><path d="M13 11v2"/></svg><div class="t" style="left:47.00px;top:658.15px;font-size:14px;color:#e6e6e8;font-weight:400;letter-spacing:0.021px;-webkit-text-stroke:0.25px #e6e6e8;">Events</div><div style="position:absolute;left:13px;top:724px;width:222px;height:101px;border:1px solid #34363c;border-radius:8px;"></div><div class="t" style="left:30.50px;top:744.15px;font-size:14px;color:#f5f5f5;font-weight:400;letter-spacing:-0.033px;-webkit-text-stroke:0.5px #f5f5f5;">Free Trial</div><svg style="position:absolute;left:194px;top:742px" width="16" height="16" viewBox="0 0 24 24" fill="none" stroke="#d8d8d8" stroke-width="1.8" stroke-linecap="round" stroke-linejoin="round"><path d="M5 12h14"/><path d="m12 5 7 7-7 7"/></svg><div class="t" style="left:30.50px;top:780.80px;font-size:13px;color:#cfcfd2;font-weight:400;letter-spacing:0.741px;">You've got 8 days left</div><div style="position:absolute;left:30px;top:805px;width:190px;height:5px;background:#f4f4f5;border-radius:3px;"></div><div style="position:absolute;left:30px;top:805px;width:139px;height:5px;background:#8b8b8f;border-radius:3px 0 0 3px;"></div><svg style="position:absolute;left:12px;top:846px" width="18" height="18" viewBox="0 0 24 24" fill="none" stroke="#e0e0e2" stroke-width="2" stroke-linecap="round" stroke-linejoin="round"><circle cx="12" cy="12" r="10"/><path d="M9.09 9a3 3 0 0 1 5.83 1c0 2-3 3-3 3"/><path d="M12 17h.01"/></svg><div class="t" style="left:41.00px;top:848.15px;font-size:14px;color:#ececee;font-weight:400;letter-spacing:0.540px;-webkit-text-stroke:0.25px #ececee;">Help</div><svg style="position:absolute;left:12px;top:886px" width="18" height="18" viewBox="0 0 24 24" fill="none" stroke="#e0e0e2" stroke-width="2" stroke-linecap="round" stroke-linejoin="round"><path d="M21 15a2 2 0 0 1-2 2H7l-4 4V5a2 2 0 0 1 2-2h14a2 2 0 0 1 2 2z"/><path d="M13 8H7"/><path d="M17 12H7"/></svg><div class="t" style="left:41.00px;top:888.15px;font-size:14px;color:#ececee;font-weight:400;letter-spacing:0.564px;-webkit-text-stroke:0.25px #ececee;">Feedback</div><svg style="position:absolute;left:13px;top:925px" width="19" height="19" viewBox="0 0 24 24" fill="none" stroke="#e0e0e2" stroke-width="2" stroke-linecap="round" stroke-linejoin="round"><path d="M12.22 2h-.44a2 2 0 0 0-2 2v.18a2 2 0 0 1-1 1.73l-.43.25a2 2 0 0 1-2 0l-.15-.08a2 2 0 0 0-2.73.73l-.22.38a2 2 0 0 0 .73 2.73l.15.1a2 2 0 0 1 1 1.72v.51a2 2 0 0 1-1 1.74l-.15.09a2 2 0 0 0-.73 2.73l.22.38a2 2 0 0 0 2.73.73l.15-.08a2 2 0 0 1 2 0l.43.25a2 2 0 0 1 1 1.73V20a2 2 0 0 0 2 2h.44a2 2 0 0 0 2-2v-.18a2 2 0 0 1 1-1.73l.43-.25a2 2 0 0 1 2 0l.15.08a2 2 0 0 0 2.73-.73l.22-.39a2 2 0 0 0-.73-2.73l-.15-.08a2 2 0 0 1-1-1.74v-.5a2 2 0 0 1 1-1.74l.15-.09a2 2 0 0 0 .73-2.73l-.22-.38a2 2 0 0 0-2.73-.73l-.15.08a2 2 0 0 1-2 0l-.43-.25a2 2 0 0 1-1-1.73V4a2 2 0 0 0-2-2z"/><circle cx="12" cy="12" r="3"/></svg><div class="t" style="left:45.00px;top:928.15px;font-size:14px;color:#ececee;font-weight:400;letter-spacing:0.646px;-webkit-text-stroke:0.25px #ececee;">Settings</div><div style="position:absolute;left:9px;top:961px;width:28px;height:28px;background:#7c97a3;border-radius:50%;"></div><div class="t" style="left:18.00px;top:967.30px;font-size:15px;color:#ffffff;font-weight:400;">B</div><div class="t" style="left:49.00px;top:966.65px;font-size:14px;color:#d4d4d8;font-weight:400;letter-spacing:0.345px;">Brandon Fraser</div><svg style="position:absolute;left:229px;top:967px" width="16" height="16" viewBox="0 0 24 24" fill="none" stroke="#e8e8ea" stroke-width="2.4" stroke-linecap="round" stroke-linejoin="round"><circle cx="12" cy="12" r="1"/><circle cx="12" cy="5" r="1"/><circle cx="12" cy="19" r="1"/></svg>
</body></html>
